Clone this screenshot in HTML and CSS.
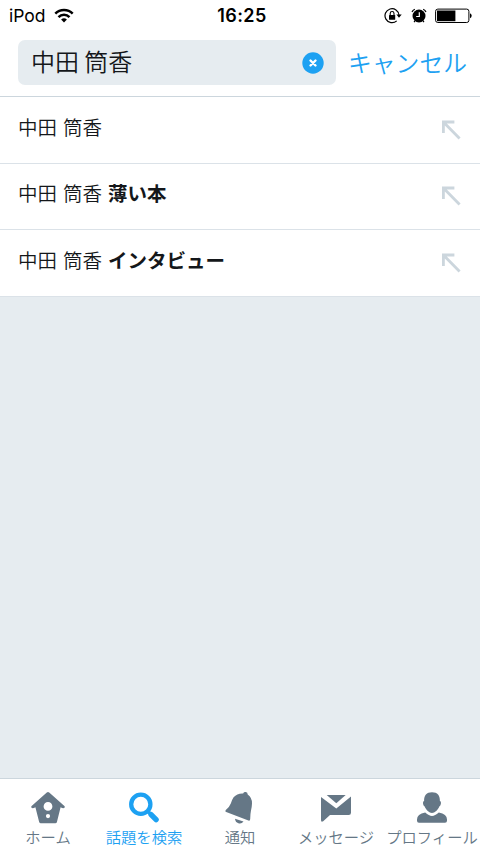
FILE: index.html
```html
<!DOCTYPE html>
<html lang="ja">
<head>
<meta charset="utf-8">
<title>検索</title>
<link rel="stylesheet" href="styles.css">
</head>
<body>
<div class="app">
  <div class="status">
    <div class="carrier"><span class="device">iPod</span>
      <svg width="20" height="16" viewBox="0 0 20 16"><g fill="none" stroke="#000" stroke-width="2.5"><path d="M1.3 5.6a12.3 12.3 0 0 1 17.4 0"/><path d="M4.5 9.1a7.8 7.8 0 0 1 11 0"/></g><path d="M10 14.6 7.1 11.6a4.1 4.1 0 0 1 5.8 0z"/></svg>
    </div>
    <time class="clock">16:25</time>
    <div class="indicators">
      <svg width="18" height="16" viewBox="0 0 18 16"><path d="M12.7 12.9A7 7 0 1 1 15 7.2" fill="none" stroke="#000" stroke-width="1.2"/><path d="M12.4 6.6h5.3L15 9.8z"/><rect x="5" y="6.9" width="6.2" height="4.9" rx=".5"/><path d="M6.2 7V5.4a1.9 1.9 0 0 1 3.8 0V7" fill="none" stroke="#000" stroke-width="1.1"/></svg>
      <svg class="alarm" width="16" height="16" viewBox="0 0 16 16"><circle cx="8" cy="8" r="6.5"/><path d="M1 3.9A5 5 0 0 1 3.8 1.2M12.2 1.2A5 5 0 0 1 15 3.9M4 12.9l-1 1.2M12 12.9l1 1.2" fill="none" stroke="#000" stroke-width="1.2"/><path d="M8.3 4.3v4.2H5.2" fill="none" stroke="#fff" stroke-width="1.2"/></svg>
      <svg width="38" height="16" viewBox="0 0 38 16"><rect x=".6" y="1.1" width="33.3" height="13.4" rx="2.2" fill="#fff" stroke="#000" stroke-width="1"/><path d="M2 2.5h18.4v10.7H2z"/><path d="M35 5.3q1.7.6 1.7 2.5T35 10.3z"/></svg>
    </div>
  </div>
  <header class="header">
    <div class="field"><span>中田 筒香</span>
      <svg width="22" height="22" viewBox="0 0 22 22"><circle cx="11" cy="11" r="10.7" fill="#1da1f2"/><path d="m8.5 8.5 5 5m0-5-5 5" stroke="#fff" stroke-width="2.4" stroke-linecap="round"/></svg>
    </div>
    <span class="cancel">キャンセル</span>
  </header>
  <main class="results">
    <div class="row"><span>中田 筒香</span><svg class="arrow" width="20" height="20" viewBox="0 0 20 20"><path d="M13.4 2H2.4v11M2.6 2.2l16 16.2"/></svg></div>
    <div class="row"><span>中田 筒香 <b>薄い本</b></span><svg class="arrow" width="20" height="20" viewBox="0 0 20 20"><path d="M13.4 2H2.4v11M2.6 2.2l16 16.2"/></svg></div>
    <div class="row"><span>中田 筒香 <b>インタビュー</b></span><svg class="arrow" width="20" height="20" viewBox="0 0 20 20"><path d="M13.4 2H2.4v11M2.6 2.2l16 16.2"/></svg></div>
  </main>
  <nav class="tabs">
    <div class="tab"><svg width="40" height="34" viewBox="0 0 40 34"><path fill-rule="evenodd" d="M18.8 2.5q1.2-1 2.4 0L36.4 16q1 1.2 0 1.8-1.2.9-3.8-.6L29 31.8q-.3 1.5-1.7 1.5H12.9q-1.4 0-1.8-1.5L7.4 17.2q-2.6 1.5-3.8.6-1-.8 0-1.8zM20 12a4.4 4.4 0 1 0 0 8.8 4.4 4.4 0 0 0 0-8.8zm0 12a2.1 2.1 0 1 0 0 4.2 2.1 2.1 0 0 0 0-4.2z"/></svg><span>ホーム</span></div>
    <div class="tab active"><svg width="40" height="34" viewBox="0 0 40 34"><circle cx="16.8" cy="14.3" r="9.6" fill="none" stroke="currentColor" stroke-width="4.3"/><path d="m23.5 21 3 3" stroke="currentColor" stroke-width="3.5"/><path d="m27.1 24.6 5 5" stroke="currentColor" stroke-width="5.4" stroke-linecap="round"/></svg><span>話題を検索</span></div>
    <div class="tab"><svg width="40" height="34" viewBox="0 0 40 34"><path d="M23.1 3.4q.8-1.7 2.7-1.4 1.9.4 1.9 2.4 4.6 3.4 4.3 9-.1 3.3-1 7.1-.7 3.3-.8 8.4 0 2.3-1.8 1.7L6.2 22.1q-1.7-.8-.4-2.2 3.7-2.8 5-6.4Q11.9 9.9 13.6 7.3q3.5-4.2 9.5-3.9z"/><path d="m15 28.8 8.5 2.7q-2 2.8-5.1 1.8-3.1-1-3.4-4.5z"/></svg><span>通知</span></div>
    <div class="tab"><svg width="40" height="34" viewBox="0 0 40 34"><path d="M10.7 5h19L20.3 13.3z"/><path d="M5 7.1 20.3 18.5 35 6.4v16.4q0 2.3-2.3 2.3H14L7.2 31.3Q5 32.7 5 30z"/></svg><span>メッセージ</span></div>
    <div class="tab"><svg width="40" height="34" viewBox="0 0 40 34"><path d="M20 2.3c5.5 0 8 3.2 7.9 8.6 1.9.4 1 4.8-.6 5.5-1.1 3-4.7 6.5-7.3 6.5s-6.2-3.5-7.3-6.5c-1.6-.7-2.5-5.1-.6-5.5C12 5.5 14.5 2.3 20 2.3z"/><path d="M13.2 22.6Q17 26 20 26t6.8-3.4q8.2 1.8 8.2 6.8v1.4q0 2-2 2H7q-2 0-2-2v-1.4q0-5 8.2-6.8z"/></svg><span>プロフィール</span></div>
  </nav>
</div>
</body>
</html>
```
FILE: styles.css
```css
* { box-sizing: border-box; }
body { margin: 0; font-family: "Noto Sans CJK JP", sans-serif; font-weight: 350; color: #14171a; }
svg { display: block; flex: none; }
.app { width: 480px; height: 852px; display: flex; flex-direction: column; background: #e6ecf0; white-space: nowrap; }
.status { height: 32px; flex: none; background: #fff; display: grid; grid-template-columns: 1fr auto 1fr; align-items: center; padding: 0 7px 1px 11px; font: 400 18px/30px Inter, sans-serif; color: #000; }
.carrier { display: flex; align-items: center; gap: 8px; margin-left: -2px; }
.device { font-size: 17.5px; }
.clock { font-weight: 600; letter-spacing: .4px; }
.indicators { display: flex; align-items: center; justify-content: flex-end; }
.alarm { margin: 0 8px 0 9px; }
.header { height: 65px; flex: none; background: #fff; border-bottom: 1px solid #ccd6dd; display: flex; padding: 8px 13px 11px 18px; align-items: center; gap: 12px; }
.field { width: 318px; flex: none; height: 45px; border-radius: 7px; background: #e6ecf0; display: flex; align-items: center; justify-content: space-between; padding: 0 12px 0 13px; font-size: 24px; line-height: 42px; }
.field span { padding-bottom: 3px; }
.cancel { font-size: 23.8px; line-height: 42px; padding-bottom: 2px; color: #1da1f2; }
.results { flex: 1; }
.row { height: 66.67px; background: #fff; border-bottom: 1px solid #dbe2e8; display: flex; align-items: center; justify-content: space-between; padding: 0 19px 0 18px; font-size: 19.5px; line-height: 30px; word-spacing: 1.6px; }
.row span { padding-bottom: 6px; }
.row b { font-weight: 700; }
.arrow { fill: none; stroke: #ccd6dd; stroke-width: 2.8; }
.tabs { height: 74px; flex: none; background: #fff; border-top: 1px solid #ccd6dd; display: grid; grid-template-columns: repeat(5, 96px); padding-top: 11px; }
.tab { display: flex; flex-direction: column; align-items: center; color: #657786; font-size: 15.3px; line-height: 24px; }
.tab svg { fill: currentColor; }
.tab.active { color: #1da1f2; }
```
